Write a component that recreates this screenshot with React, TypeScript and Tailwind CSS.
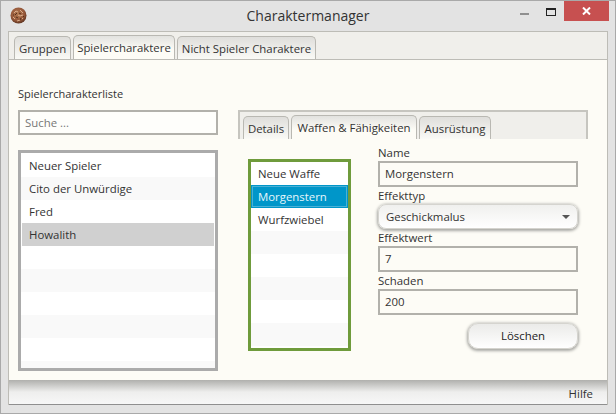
const font = { fontFamily: "'Open Sans', sans-serif" }

const playerRows = ["Neuer Spieler", "Cito der Unwürdige", "Fred", "Howalith", "", "", "", "", "", ""]
const weaponRows = ["Neue Waffe", "Morgenstern", "Wurfzwiebel", "", "", "", "", ""]

function Coin() {
  return (
    <svg width="17" height="17" viewBox="0 0 17 17">
      <defs>
        <radialGradient id="coin" cx="45%" cy="40%" r="60%">
          <stop offset="0%" stopColor="#b0764e" />
          <stop offset="70%" stopColor="#96583a" />
          <stop offset="100%" stopColor="#5f3420" />
        </radialGradient>
      </defs>
      <circle cx="8.5" cy="8.5" r="8" fill="url(#coin)" />
      <path d="M4 6l2-2 2 1M10 3l3 3M3 10l2 2M8 8l2 1 3-1M7 14l3-1M12 11l1 1" fill="none" stroke="#d9ae8c" strokeWidth="1" />
      <path d="M5 8l2-2M9 6l2 1M6 10l2 1M11 11l-1 2M3 8l1 0M13 9l1 1" stroke="#55301c" strokeWidth="1" />
    </svg>
  )
}

function Tab({ label, active, w }: { label: string; active?: boolean; w: string }) {
  return (
    <div
      className={`flex items-center justify-center pt-[1px] ${w} rounded-t-[5px] border border-b-0 border-[#b9b8b2] text-[11.4px] text-[#333] ${
        active ? "h-[24px] bg-gradient-to-b from-[#e2e2df] to-[#fdfcf6] to-60%" : "h-[23px] bg-gradient-to-b from-[#dfdedb] to-[#fafaf6]"
      }`}
    >
      {label}
    </div>
  )
}

function Field({ label, value }: { label: string; value: string }) {
  return (
    <div className="flex flex-col">
      <div className="flex h-[17px] items-center text-[11.4px] leading-none text-[#333]">{label}</div>
      <div className="flex h-[26px] items-center border-2 border-[#b2b1ab] bg-[#fdfcf6] pl-[5px] text-[11.4px] text-[#333]">{value}</div>
    </div>
  )
}

export default function App() {
  return (
    <div style={font} className="flex h-[414px] w-[616px] flex-col overflow-hidden border border-[#a9a9a9] bg-[#e3e3e3]">
      <div className="relative flex h-[30px] shrink-0 items-center justify-center text-[14px] text-[#333]">
        <div className="absolute left-[9px] top-[6px]"><Coin /></div>
        <span className="mt-[-1px]">Charaktermanager</span>
        <div className="absolute left-[519px] top-[12px] h-[2px] w-[9px] bg-[#8f8f8f]" />
        <div className="absolute left-[545px] top-[7px] h-[8px] w-[10px] border border-t-[2px] border-[#222]" />
        <div className="absolute left-[563px] top-0 flex h-[20px] w-[45px] items-center justify-center bg-[#c75050]">
          <svg width="9" height="8" viewBox="0 0 9 8">
            <path d="M1 0.5l7 7M8 0.5l-7 7" stroke="#fff" strokeWidth="2" />
          </svg>
        </div>
      </div>

      <div className="ml-[7px] mr-[7px] flex h-[374px] w-[600px] flex-col border border-b-0 border-[#bdbcb6] bg-[#fdfcf6]">
        <div className="flex h-[28px] shrink-0 items-end gap-[2px] border-b border-[#bdbcb6] bg-[#f0efeb] pl-[5px]">
          <Tab label="Gruppen" w="w-[57px]" />
          <Tab label="Spielercharaktere" w="w-[102px]" active />
          <Tab label="Nicht Spieler Charaktere" w="w-[139px]" />
        </div>

        <div className="flex min-h-0 flex-1 pl-[9px] pt-[26px]">
          <div className="flex w-[200px] flex-col">
            <div className="flex h-[24px] items-start text-[11px] text-[#333]">Spielercharakterliste</div>
            <div className="flex h-[25px] items-center border-2 border-[#b2b1ab] bg-[#fefefb] pl-[5px] pt-[1px] text-[11.4px] text-[#777]">Suche ...</div>
            <div className="mt-[15px] h-[221px] overflow-hidden border-[3px] border-[#ababab] bg-white pt-[1px]">
              {playerRows.map((row, i) => (
                <div
                  key={i}
                  className={`flex h-[23px] items-center pt-[1px] text-[11.4px] text-[#333] ${
                    row === "Howalith" ? "ml-[1px] mr-[1px] bg-[#d0d0d0] pl-[7px]" : i % 2 === 1 ? "bg-[#f9f9f9] pl-[8px]" : "bg-white pl-[8px]"
                  }`}
                >
                  {row}
                </div>
              ))}
            </div>
          </div>

          <div className="ml-[20px] mt-[24px] flex w-[350px] flex-col">
            <div className="flex h-[29px] items-end gap-[2px] border-2 border-b-0 border-[#c6c5bf] bg-[#f0efeb] pl-[3px]">
              <Tab label="Details" w="w-[46px]" />
              <Tab label="Waffen & Fähigkeiten" w="w-[126px]" active />
              <Tab label="Ausrüstung" w="w-[72px]" />
            </div>
            <div className="flex pl-[10px]">
              <div className="mt-[20px] h-[192px] w-[103px] overflow-hidden border-[3px] border-[#6f9b3c] bg-white">
                {weaponRows.map((row, i) => (
                  <div
                    key={i}
                    className={`flex h-[23px] items-center text-[11.4px] ${
                      row === "Morgenstern"
                        ? "border border-[#0096c9] bg-[#0096c9] pl-[6px] text-[#e6f6fc] shadow-[inset_0_0_0_1px_#4ab0d6]"
                        : i % 2 === 1 ? "bg-[#f9f9f9] pl-[7px] text-[#333]" : "bg-white pl-[7px] text-[#333]"
                    }`}
                  >
                    {row}
                  </div>
                ))}
              </div>
              <div className="ml-[27px] mt-[5px] flex w-[200px] flex-col">
                <Field label="Name" value="Morgenstern" />
                <div className="flex h-[17px] items-center text-[11.4px] leading-none text-[#333]">Effekttyp</div>
                <div className="flex h-[25px] items-center justify-between rounded-[8px] border border-[#d5d4cf] bg-gradient-to-b from-[#f0f0ee] to-[#ffffff] pl-[7px] pr-[7px] text-[11.4px] text-[#333] shadow-[0_1px_3px_1px_#a8a8a4]">
                  Geschickmalus
                  <div className="h-0 w-0 border-x-[4px] border-t-[4px] border-x-transparent border-t-[#555]" />
                </div>
                <Field label="Effektwert" value="7" />
                <Field label="Schaden" value="200" />
                <div className="mt-[8px] flex h-[26px] w-[110px] items-center justify-center self-end rounded-[10px] border border-[#d5d4cf] bg-gradient-to-b from-[#ebebe9] to-[#ffffff] text-[11.4px] text-[#222] shadow-[0_1px_3px_1px_#a8a8a4]">
                  Löschen
                </div>
              </div>
            </div>
          </div>
        </div>

        <div className="flex h-[25px] shrink-0 items-center justify-end border-b border-[#8f8f8f] bg-gradient-to-b from-[#b0b0ad] via-[#eeeeed] via-50% to-[#f7f7f7] pr-[14px] pt-[3px] text-[11.4px] text-[#333]">
          Hilfe
        </div>
      </div>
    </div>
  )
}
